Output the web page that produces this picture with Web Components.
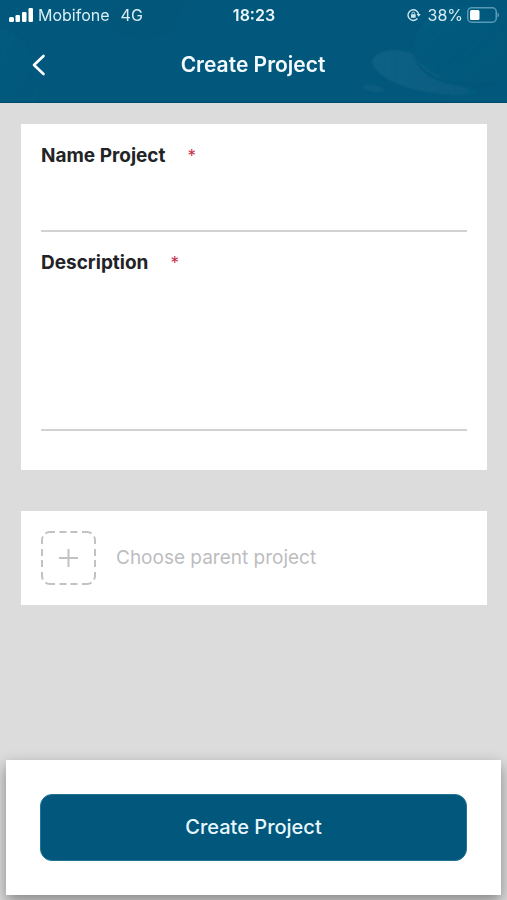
<!DOCTYPE html>
<html lang="en">
<head>
<meta charset="utf-8">
<meta name="viewport" content="width=device-width, initial-scale=1">
<title>Create Project</title>
<style>
  html, body { margin: 0; }
  body { font-family: Inter, "Liberation Sans", sans-serif; color: #222326; background: #dcdcdc; }
</style>
</head>
<body>
<project-screen></project-screen>
<script>
  const define = (name, html, setup) => {
    const template = document.createElement('template');
    template.innerHTML = '<style>*{box-sizing:border-box}</style>' + html;
    customElements.define(name, class extends HTMLElement {
      constructor() {
        super();
        this.attachShadow({ mode: 'open' }).append(template.content.cloneNode(true));
      }
      connectedCallback() { if (setup) setup(this, this.shadowRoot); }
    });
  };

  define('status-bar', `
    <style>
      :host { display: grid; grid-template-columns: 1fr auto 1fr; align-items: center; height: 30px; padding: 0 8px 0 9px; font-size: 16px; line-height: 20px; color: #d9edf5; }
      div { display: flex; align-items: center; }
      .carrier { gap: 5px; }
      .network { margin-left: 6px; }
      .power { justify-content: flex-end; gap: 4px; }
      .lock { margin-right: 3px; }
      time { font-weight: 600; color: #e8f6fb; }
      svg { display: block; flex: none; }
    </style>
    <div class="carrier">
      <svg width="24" height="15" viewBox="0 0 24 15" fill="#fff" aria-hidden="true"><rect y="9" width="5" height="5" rx="1.5"/><rect x="6.500" y="7" width="4.500" height="7" rx="1.200"/><rect x="13" y="4" width="4.500" height="10" rx="1.200"/><rect x="19.500" y="0" width="4.500" height="14" rx="1.200"/></svg>
      <span>Mobifone</span><span class="network">4G</span>
    </div>
    <time>18:23</time>
    <div class="power">
      <svg class="lock" width="14" height="14" viewBox="0 0 15 14" fill="none" stroke="#cfe8f1" stroke-width="1.500" aria-hidden="true"><path d="M11.200 10.800A5.700 5.700 0 1 1 12.500 6.500"/><path d="M10.300 6h4.400l-2.200 3z" fill="#cfe8f1" stroke="none"/><rect x="4.300" y="6.300" width="5" height="3.700" rx=".5" fill="#cfe8f1" stroke="none"/><path d="M5.400 6.500V5.300a1.400 1.400 0 0 1 2.800 0v1.200" stroke-width="1"/></svg>
      <span>38%</span>
      <svg width="32" height="16" viewBox="0 0 32 16" fill="none" aria-hidden="true"><rect x=".75" y=".75" width="28.500" height="14.500" rx="4" stroke="#5b9ab5" stroke-width="1.500"/><path d="M30.500 5.500c2 .7 2 4.300 0 5z" fill="#5b9ab5"/><rect x="3" y="3" width="9.500" height="10" rx="1.500" fill="#fff"/></svg>
    </div>`);

  define('app-header', `
    <style>
      :host { display: block; position: relative; overflow: hidden; background: #02587c; color: #f4fcff; border-bottom: 1px solid #01486b; }
      .art { position: absolute; inset: 0; width: 100%; height: 100%; }
      status-bar, nav { position: relative; }
      nav { display: grid; grid-template-columns: 40px 1fr 40px; align-items: center; padding: 13px 20px 15px 19px; }
      h1 { margin: 0; font-size: 21px; line-height: 24px; font-weight: 600; text-align: center; }
      button { display: flex; align-items: center; justify-content: center; width: 40px; height: 44px; padding: 0; border: 0; background: none; color: inherit; }
    </style>
    <svg class="art" viewBox="0 0 507 102" preserveAspectRatio="xMaxYMid slice" aria-hidden="true">
      <defs>
        <linearGradient id="g" x1="0" y1="0" x2="1" y2="1"><stop offset="0" stop-color="#1b6f92" stop-opacity=".4"/><stop offset="1" stop-color="#02587c" stop-opacity=".2"/></linearGradient>
        <linearGradient id="brim"><stop offset="0" stop-color="#126688"/><stop offset="1" stop-color="#126688" stop-opacity=".4"/></linearGradient>
        <filter id="soft"><feGaussianBlur stdDeviation="1"/></filter>
      </defs>
      <g filter="url(#soft)">
        <path d="M0 28c18 4 31 18 34 37s9 26 2 37H0z" fill="url(#g)" opacity=".45"/>
        <path d="M110 18c4 20 42 25 63 11l10-29H124z" fill="#004f75" opacity=".2"/>
        <path d="M372 62c2-12 22-15 40-9 8 14 29 27 65 38-3 5-24 5-45 2-31-4-58-18-60-31z" fill="url(#brim)" opacity=".7"/>
        <path d="M414 55c-3-28 18-48 43-50 30-2 46 20 50 43v33c-34 10-78 1-93-26z" fill="url(#g)" opacity=".5"/>
        <path d="M414 56c10 22 43 33 86 26-44 11-82-3-86-26z" fill="#004f75" opacity=".5"/>
        <path d="M361 86c7-4 20-1 25 5-8 3-20 1-25-5z" fill="#14688a" opacity=".35"/>
      </g>
    </svg>
    <status-bar></status-bar>
    <nav>
      <button type="button" aria-label="Back"><svg width="14" height="22" viewBox="0 0 14 22" fill="none" stroke="#fff" stroke-width="2.600" stroke-linecap="round" stroke-linejoin="round"><path d="M11.500 2 2 11l9.500 9"/></svg></button>
      <h1><slot></slot></h1>
    </nav>`);

  define('form-card', `
    <style>
      :host { display: block; background: #fff; padding: 20px; }
    </style>
    <slot></slot>`);

  define('form-field', `
    <style>
      :host { display: block; }
      label { display: flex; gap: 22px; font-size: 19px; line-height: 24px; font-weight: 700; }
      .star { font-size: 17px; font-weight: 400; color: #c92c4b; }
      input, textarea { display: block; width: 100%; margin: 0; padding: 8px 0; border: 0; border-bottom: 2px solid #d2d2d4; border-radius: 0; background: none; outline: 0; resize: none; font: 18px/24px Inter, sans-serif; color: inherit; }
      input { height: 64px; }
      textarea { height: 156px; }
    </style>
    <label for="control"><span><slot></slot></span><span class="star" aria-hidden="true">*</span></label>`,
    (host, root) => {
      if (root.querySelector('#control')) return;
      const control = document.createElement(host.hasAttribute('multiline') ? 'textarea' : 'input');
      control.id = 'control';
      control.required = true;
      root.append(control);
    });

  define('parent-picker', `
    <style>
      :host { display: block; }
      button { display: flex; align-items: center; gap: 20px; width: 100%; padding: 0; border: 0; background: none; font: 19px/24px Inter, sans-serif; color: #bdbdbf; text-align: left; }
      svg { display: block; flex: none; }
    </style>
    <button type="button">
      <svg width="55" height="54" viewBox="0 0 55 54" fill="none" stroke="#c2c2c4" stroke-width="2" aria-hidden="true">
        <path d="M18.500 1h7M29.500 1h7M41 1h5q3 0 4.500 1.500M14 1H9Q6 1 4.500 2.500M18.500 53h7M29.500 53h7M41 53h5q3 0 4.500-1.500M14 53H9q-3 0-4.500-1.500M1 18v7M1 29v7M1 13V9q0-2 1-3.500M1 41v4q0 2 1 3.500M54 18v7M54 29v7M54 13V9q0-2-1-3.500M54 41v4q0 2-1 3.500"/>
        <path d="M18 27h19M27.500 18v18"/>
      </svg>
      <span><slot></slot></span>
    </button>`);

  define('action-footer', `
    <style>
      :host { display: block; background: #fff; margin: 0 6px 5px; padding: 34px; box-shadow: 0 6px 14px rgba(0, 0, 0, .4); }
      button { display: block; width: 100%; padding: 21px; border: 1px solid #247397; border-radius: 12px; background: #02587c; color: #e8f7fd; font: 500 20px/23px Inter, sans-serif; }
    </style>
    <button type="submit"><slot></slot></button>`);

  define('project-screen', `
    <style>
      :host { display: flex; flex-direction: column; min-height: 100vh; overflow: hidden; }
      main { flex: 1; display: flex; flex-direction: column; gap: 41px; padding: 21px 20px 40px 21px; }
      .fields { padding-bottom: 39px; }
      form-field + form-field { margin-top: 19px; }
    </style>
    <app-header>Create Project</app-header>
    <main>
      <form-card class="fields">
        <form-field>Name Project</form-field>
        <form-field multiline>Description</form-field>
      </form-card>
      <form-card><parent-picker>Choose parent project</parent-picker></form-card>
    </main>
    <action-footer>Create Project</action-footer>`);
</script>
</body>
</html>
